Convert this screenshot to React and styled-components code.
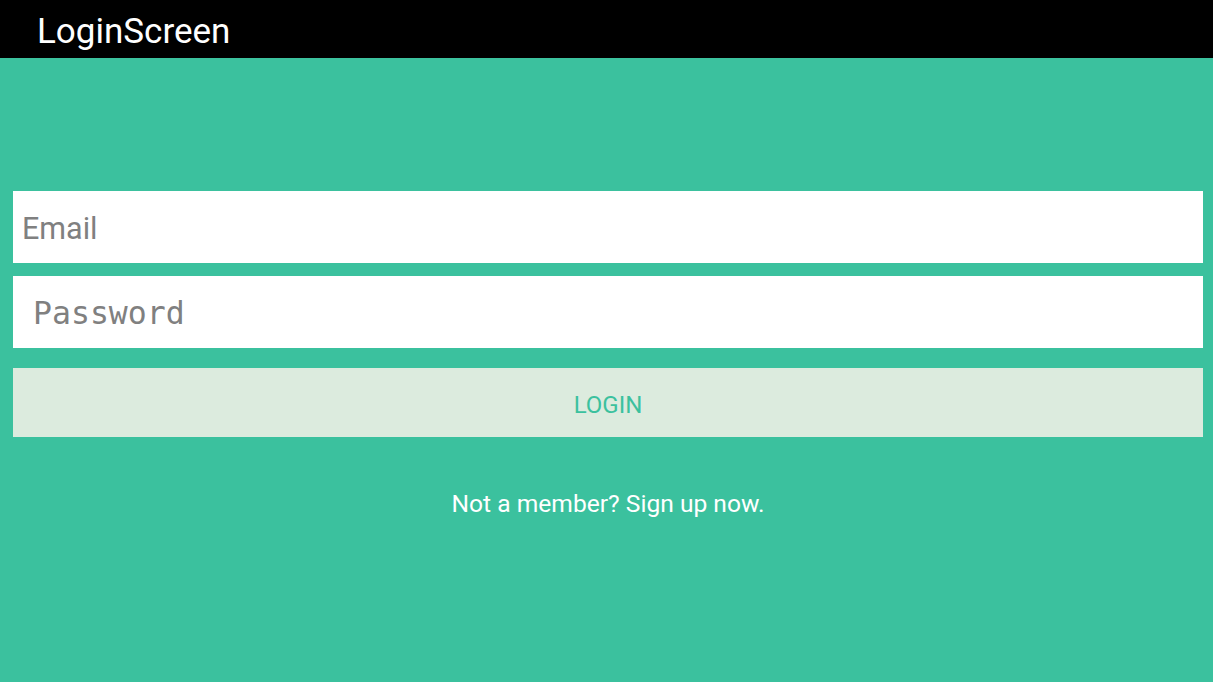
import React from "react";
import styled, { createGlobalStyle } from "styled-components";

const Global = createGlobalStyle`
  html, body { margin: 0; padding: 0; }
  body { font-family: Roboto, "Noto Sans", sans-serif; background: #3bc19e; }
  * { box-sizing: border-box; }
`;

const Screen = styled.div`
  width: 1213px;
  height: 682px;
  display: flex;
  flex-direction: column;
  background: #3bc19e;
  overflow: hidden;
`;

const TitleBar = styled.header`
  height: 58px;
  background: #000;
  display: flex;
  align-items: center;
  padding-left: 37px;
`;

const Title = styled.h1`
  margin: 0;
  font-family: Roboto, sans-serif;
  font-weight: 400;
  font-size: 35px;
  line-height: 1;
  color: #fff;
  margin-top: 5px;
`;

const Form = styled.form`
  display: flex;
  flex-direction: column;
  padding: 133px 10px 0 13px;
`;

const Field = styled.input`
  height: 72px;
  border: none;
  outline: none;
  background: #fff;
  color: #808080;
  padding: 2px 0 0 ${(p) => (p.$mono ? "20px" : "9px")};
  font-family: ${(p) =>
    p.$mono ? '"DejaVu Sans Mono", monospace' : "Roboto, sans-serif"};
  font-size: ${(p) => (p.$mono ? "31.5px" : "30.5px")};
  margin-bottom: ${(p) => p.$gap || "0px"};
  &::placeholder { color: #808080; opacity: 1; }
`;

const LoginButton = styled.button`
  height: 69px;
  margin-top: 20px;
  border: none;
  background: #dcebde;
  color: #3bc19e;
  font-family: Roboto, sans-serif;
  font-size: 24px;
  text-transform: uppercase;
  cursor: pointer;
  padding: 4px 0 0;
`;

const SignUp = styled.p`
  margin: 52px 0 0;
  text-align: center;
  color: #fff;
  font-family: Roboto, sans-serif;
  font-size: 24.6px;
  line-height: 30px;
`;

export default function App() {
  return (
    <Screen>
      <Global />
      <TitleBar>
        <Title>LoginScreen</Title>
      </TitleBar>
      <Form onSubmit={(e) => e.preventDefault()}>
        <Field type="email" placeholder="Email" $gap="13px" />
        <Field type="password" placeholder="Password" $mono />
        <LoginButton type="submit">Login</LoginButton>
        <SignUp>Not a member? Sign up now.</SignUp>
      </Form>
    </Screen>
  );
}
